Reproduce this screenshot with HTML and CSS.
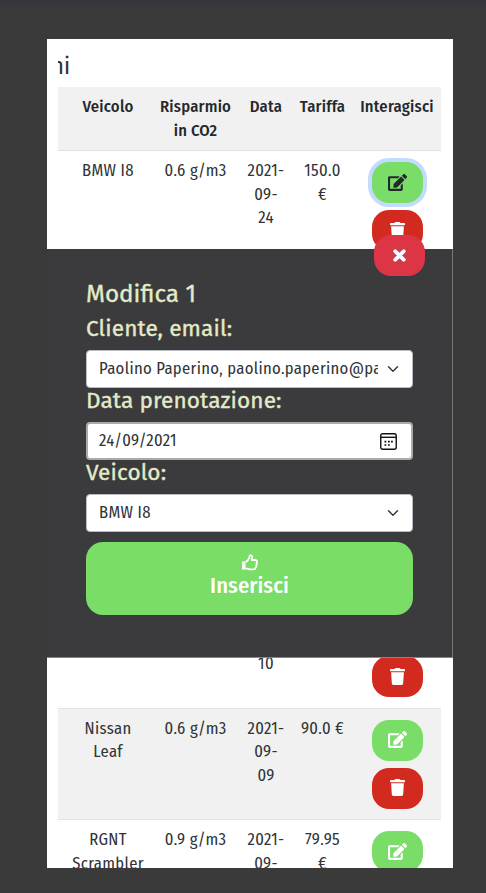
FILE: index.html
```
<!DOCTYPE html>
<html lang="it">
<head>
<meta charset="utf-8">
<title>Prenotazioni</title>
<link rel="stylesheet" href="styles.css">
</head>
<body>
<svg width="0" height="0" class="defs">
  <symbol id="edit" viewBox="0 0 576 512"><path fill="currentColor" d="M402.600 83.200l90.200 90.200c3.800 3.800 3.800 10 0 13.800L274.400 405.600l-92.800 10.300c-12.400 1.400-22.900-9.100-21.500-21.500l10.300-92.800L388.800 83.200c3.800-3.800 10-3.800 13.800 0zm162-22.900l-48.800-48.800c-15.200-15.200-39.900-15.200-55.200 0l-35.400 35.400c-3.800 3.800-3.800 10 0 13.800l90.200 90.200c3.800 3.800 10 3.800 13.800 0l35.400-35.400c15.200-15.300 15.200-40 0-55.200zM384 346.200V448H64V128h229.800c3.200 0 6.200-1.300 8.500-3.500l40-40c7.600-7.600 2.200-20.500-8.500-20.500H48C21.500 64 0 85.500 0 112v352c0 26.500 21.500 48 48 48h352c26.500 0 48-21.500 48-48V306.200c0-10.700-12.900-16-20.500-8.500l-40 40c-2.200 2.300-3.500 5.300-3.500 8.500z"/></symbol>
  <symbol id="trash" viewBox="0 0 448 512"><path fill="currentColor" d="M432 32H312l-9.400-18.700A24 24 0 0 0 281.100 0H166.800a23.720 23.720 0 0 0-21.400 13.300L136 32H16A16 16 0 0 0 0 48v32a16 16 0 0 0 16 16h416a16 16 0 0 0 16-16V48a16 16 0 0 0-16-16zM53.200 467a48 48 0 0 0 47.900 45h245.800a48 48 0 0 0 47.900-45L416 128H32z"/></symbol>
  <symbol id="chev" viewBox="0 0 16 16"><path fill="none" stroke="#343a40" stroke-width="2" stroke-linecap="round" stroke-linejoin="round" d="M2 5l6 6 6-6"/></symbol>
</svg>
<main class="page">
  <div class="scroll">
    <h1 class="title"><span>ni</span></h1>
    <table>
      <colgroup><col class="c0"><col class="c1"><col class="c2"><col class="c3"><col class="c4"><col class="c5"></colgroup>
      <thead><tr><th></th><th>Veicolo</th><th>Risparmio<br>in CO2</th><th>Data</th><th>Tariffa</th><th>Interagisci</th></tr></thead>
      <tbody>
        <tr><td></td><td>BMW I8</td><td>0.6 g/m3</td><td>2021-<br>09-<br>24</td><td>150.0<br>€</td><td><button class="btn edit active"><svg><use href="#edit"/></svg></button><button class="btn del"><svg><use href="#trash"/></svg></button></td></tr>
        <tr><td colspan="6"></td></tr>
        <tr><td colspan="6"></td></tr>
        <tr><td colspan="6"></td></tr>
        <tr><td></td><td></td><td></td><td>2021-<br>09-<br>10</td><td></td><td><button class="btn edit"><svg><use href="#edit"/></svg></button><button class="btn del"><svg><use href="#trash"/></svg></button></td></tr>
        <tr><td></td><td>Nissan<br>Leaf</td><td>0.6 g/m3</td><td>2021-<br>09-<br>09</td><td>90.0 €</td><td><button class="btn edit"><svg><use href="#edit"/></svg></button><button class="btn del"><svg><use href="#trash"/></svg></button></td></tr>
        <tr><td></td><td>RGNT<br>Scrambler</td><td>0.9 g/m3</td><td>2021-<br>09-</td><td>79.95<br>€</td><td><button class="btn edit"><svg><use href="#edit"/></svg></button></td></tr>
      </tbody>
    </table>
  </div>
  <section class="dialog">
    <button class="btn close"><svg viewBox="0 0 14 14"><path d="M3.500 3.500l7 7M10.500 3.500l-7 7" stroke="#fff" stroke-width="3.200" stroke-linecap="round"/></svg></button>
    <h2>Modifica 1</h2>
    <h3>Cliente, email:</h3>
    <div class="field"><span class="value">Paolino Paperino, paolino.paperino@pa</span><svg class="chev"><use href="#chev"/></svg></div>
    <h3>Data prenotazione:</h3>
    <div class="field date"><span class="value">24/09/2021</span><svg class="cal" viewBox="0 0 17 17"><rect x=".75" y=".75" width="15.500" height="15.500" rx="2" fill="none" stroke="#111" stroke-width="1.400"/><path d="M1 4.300h15" stroke="#111" stroke-width="1.400"/><path d="M8 8.700h1.800M11 8.700h1.800M4.500 8.700h1.800M4.500 12h1.800M8 12h1.800" stroke="#111" stroke-width="1.700"/></svg></div>
    <h3>Veicolo:</h3>
    <div class="field"><span class="value">BMW I8</span><svg class="chev"><use href="#chev"/></svg></div>
    <button class="submit"><svg viewBox="0 0 17 17"><path d="M1 7.500h3.500v8H1z" fill="#fff"/><path d="M4.500 8C7 7 8 4.500 8.600 2.200 9 .6 11.500 1 11.300 3.500L10.700 6h3.600c1.800 0 2 1.700 1.200 2.600.8.900.5 2-.3 2.600.4 1 0 1.900-.7 2.300 0 1.300-.8 1.900-2 1.900H9.500c-2 0-3-.9-5-1" fill="none" stroke="#fff" stroke-width="1.800" stroke-linejoin="round"/></svg><span>Inserisci</span></button>
  </section>
</main>
</body>
</html>
```
FILE: styles.css
```
* { box-sizing: border-box; }
html { height: 100%; overflow: hidden; }
body {
  margin: 0; height: 893px; overflow: hidden;
  padding: 39px 33px 25px 47px;
  background: #3a3a3a linear-gradient(#36373c, #36373c) 0 0 / 100% 5px no-repeat;
  font: 400 16.6px/23.5px "Fira Sans Condensed", "Fira Sans", "Open Sans", "Noto Sans", sans-serif;
  letter-spacing: .33px;
  color: #303438;
}
.defs { position: absolute; }
.page {
  position: relative; width: 406px; height: 829px; overflow: hidden;
  background: #fff; padding: 12px 12px 0 11px;
}
.scroll { overflow: hidden; }
.title {
  margin: 0; height: 36px; width: 12px; display: flex; justify-content: flex-end;
  font-size: 24px; line-height: 31px; font-weight: 400; letter-spacing: 0;
}
table { width: 383px; table-layout: fixed; border-collapse: separate; border-spacing: 0; text-align: center; }
.c0 { width: 7px; } .c1 { width: 86px; } .c2 { width: 89px; } .c3 { width: 52px; } .c4 { width: 61px; } .c5 { width: 88px; }
th, td { padding: 8px 0; vertical-align: top; border-bottom: 1px solid #e2e2e5; white-space: nowrap; }
th { height: 64px; background: #f1f1f1; font-weight: 500; letter-spacing: .2px; color: #24282c; }
td { height: 111.5px; }
tbody tr:nth-child(even) td { background: #f1f1f1; }
.btn {
  display: flex; align-items: center; justify-content: center;
  width: 51px; height: 41px; padding: 0 0 1px; border: 0; border-radius: 17px; color: #fff;
}
td .btn { margin: 3px auto 7px; }
td .btn + .btn { margin: 0 auto; }
.edit { background: #79dd67; }
.edit svg { width: 19px; height: 17px; }
.del { background: #d32a20; }
.del svg { width: 15px; height: 17px; }
.active { color: #24282c; box-shadow: 0 0 0 4px #c2dbfe; }
.dialog {
  position: absolute; left: 0; top: 210px; width: 406px; height: 409px;
  background: #3b3b3d; border-right: 1px solid #777; border-bottom: 1px solid #8a8686;
  padding: 27px 39px 0;
}
.close { position: absolute; left: 327px; top: -14px; background: #dc3545; }
.close svg { width: 17px; height: 17px; }
h2, h3 { margin: 0; color: #e3eac8; white-space: nowrap; font-family: "Fira Sans", "Noto Sans", sans-serif; font-weight: 400; letter-spacing: .1px; -webkit-text-stroke: .35px #e3eac8; }
h2 { font-size: 24.3px; line-height: 35px; height: 39px; letter-spacing: 0; }
h3 { font-size: 22.6px; line-height: 28px; height: 35px; }
.field {
  display: flex; align-items: center; width: 327px; height: 38px; padding: 0 12px;
  background: #fff; border: 1px solid #b9bec5; border-radius: 4px; color: #303438;
}
.field.date { border: 2px solid #aaa; padding: 0 14px 0 11px; }
.value { width: 279px; overflow: hidden; white-space: nowrap; }
.chev { width: 12px; height: 12px; margin-left: 9px; flex: none; }
.cal { width: 17px; height: 17px; margin-left: auto; flex: none; }
.dialog .field + h3 { margin-top: -1px; }
.submit {
  display: flex; flex-direction: column; align-items: center; width: 327px; height: 73px;
  margin-top: 10px; padding: 12px 0 0; border: 0; border-radius: 17px;
  background: #79dd67; color: #fff; font: 500 22.5px/30px "Fira Sans Condensed", "Noto Sans", sans-serif; letter-spacing: .1px;
}
.submit svg { width: 17px; height: 17px; }
```
